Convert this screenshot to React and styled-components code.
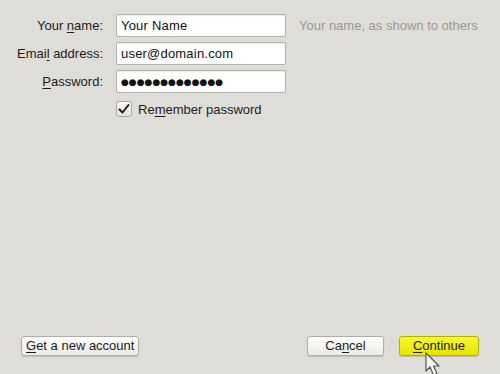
import React from "react";
import styled, { createGlobalStyle } from "styled-components";

const GlobalStyle = createGlobalStyle`
  html, body {
    margin: 0;
    padding: 0;
    background: #dfddd8;
  }
  body {
    font-family: "Liberation Sans", Arial, sans-serif;
    font-size: 13px;
    color: #1c1c1c;
  }
`;

const fields = [
  { label: "Your ", key: "n", rest: "ame:", value: "Your Name", hint: "Your name, as shown to others" },
  { label: "Emai", key: "l", rest: " address:", value: "user@domain.com" },
  { label: "", key: "P", rest: "assword:", value: "●●●●●●●●●●●●●", secret: true },
];

const App = () => (
  <>
    <GlobalStyle />
    <Page>
      <Form>
        {fields.map((f) => (
          <React.Fragment key={f.rest}>
            <Label>
              {f.label}
              <u>{f.key}</u>
              {f.rest}
            </Label>
            <Field readOnly value={f.value} secret={f.secret} />
            <Hint>{f.hint}</Hint>
          </React.Fragment>
        ))}
        <span />
        <CheckRow>
          <CheckBox>
            <svg width="12" height="12" viewBox="0 0 12 12">
              <path d="M1.5 6.5 L4.5 9.5 L10.5 2" fill="none" stroke="#1a1a1a" strokeWidth="2" strokeLinecap="round" strokeLinejoin="round" />
            </svg>
          </CheckBox>
          <span>
            Re<u>m</u>ember password
          </span>
        </CheckRow>
      </Form>

      <ButtonBar>
        <Button>
          <u>G</u>et a new account
        </Button>
        <RightGroup>
          <Button width={77}>
            Ca<u>n</u>cel
          </Button>
          <Button primary width={80}>
            <u>C</u>ontinue
          </Button>
        </RightGroup>
      </ButtonBar>

      <Pointer width="18" height="26" viewBox="0 0 18 26">
        <path d="M1 1 L1 19 L5 15 L8.5 23 L12 21.5 L8.5 14 L14 14 Z" fill="#f4f4f4" stroke="#555" strokeWidth="1.2" strokeLinejoin="round" />
      </Pointer>
    </Page>
  </>
);

const Page = styled.div`
  position: relative;
  height: 374px;
  display: flex;
  flex-direction: column;
  overflow: hidden;
`;

const Form = styled.div`
  display: grid;
  grid-template-columns: 103px 170px auto;
  column-gap: 13px;
  row-gap: 5px;
  padding-top: 14px;
  grid-auto-rows: 23px;
  align-items: center;
`;

const Label = styled.div`
  text-align: right;
  color: #1c1c1c;
  white-space: nowrap;

  u {
    text-decoration-thickness: 1px;
    text-underline-offset: 2px;
  }
`;

const Field = styled.input`
  box-sizing: border-box;
  width: 170px;
  height: 23px;
  margin: 0;
  padding: 0 4px;
  border: 1px solid #b2b0aa;
  border-radius: 2px;
  background: #fff;
  box-shadow: inset 0 1px 1px rgba(0, 0, 0, 0.08);
  font-family: ${(p) => (p.secret ? '"DejaVu Sans", sans-serif' : '"Liberation Sans", Arial, sans-serif')};
  font-size: ${(p) => (p.secret ? "9px" : "13px")};
  letter-spacing: ${(p) => (p.secret ? "0px" : "0.2px")};
  color: #111;
  outline: none;
`;

const Hint = styled.div`
  color: #9a9894;
  white-space: nowrap;
`;

const CheckRow = styled.label`
  display: flex;
  align-items: center;
  gap: 6px;
  margin-top: -1px;

  u {
    text-underline-offset: 2px;
  }
`;

const CheckBox = styled.span`
  box-sizing: border-box;
  width: 16px;
  height: 16px;
  display: flex;
  align-items: center;
  justify-content: center;
  border: 1px solid #a9a7a1;
  border-radius: 3px;
  background: linear-gradient(#fbfbfa, #e4e2de);
`;

const ButtonBar = styled.div`
  margin-top: auto;
  display: flex;
  justify-content: space-between;
  align-items: center;
  padding: 0 21px 18px 21px;
`;

const RightGroup = styled.div`
  display: flex;
  gap: 15px;
`;

const Button = styled.button`
  box-sizing: border-box;
  height: 20px;
  width: ${(p) => (p.width ? `${p.width}px` : "auto")};
  padding: 0 4px;
  border: 1px solid ${(p) => (p.primary ? "#b3b100" : "#b0aea8")};
  border-radius: 3px;
  background: ${(p) =>
    p.primary ? "linear-gradient(#f6f630, #e6e600)" : "linear-gradient(#ffffff, #ebeae6)"};
  box-shadow: 0 1px 1px rgba(0, 0, 0, 0.15);
  font-family: "Liberation Sans", Arial, sans-serif;
  font-size: 13px;
  color: #1c1c1c;
  line-height: 18px;

  u {
    text-underline-offset: 2px;
  }
`;

const Pointer = styled.svg`
  position: absolute;
  left: 425px;
  top: 352px;
`;

export default App;
